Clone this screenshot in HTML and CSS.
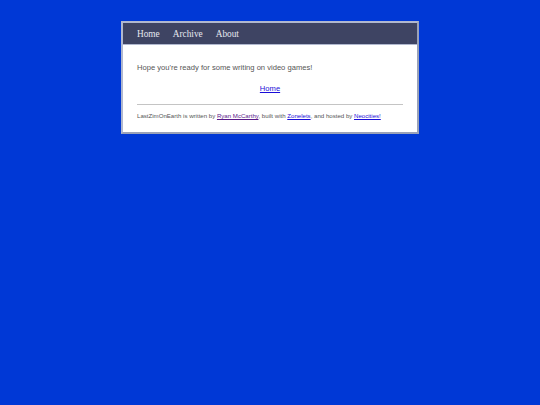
FILE: index.html
```html
<!DOCTYPE html>
<html lang="en">
<head>
<meta charset="utf-8">
<title>LastZimOnEarth</title>
<link rel="stylesheet" href="styles.css">
</head>
<body>
<div class="container">
  <nav class="header">
    <a class="nav-link" href="#">Home</a>
    <a class="nav-link" href="#">Archive</a>
    <a class="nav-link" href="#">About</a>
  </nav>
  <main class="content">
    <p class="intro">Hope you're ready for some writing on video games!</p>
    <p class="home-row"><a class="home-link" href="#">Home</a></p>
    <hr class="rule">
    <p class="footer">LastZimOnEarth is written by <a class="visited" href="#">Ryan McCarthy</a>, built with <a class="link" href="#">Zonelets</a>, and hosted by <a class="link" href="#">Neocities!</a></p>
  </main>
</div>
</body>
</html>
```
FILE: styles.css
```css
html, body {
  margin: 0;
  padding: 0;
}
body {
  background: #0038d6;
  font-family: "Liberation Sans", Arial, sans-serif;
  padding-top: 21px;
}
.container {
  width: 294px;
  margin: 0 auto;
  border: 2px solid #b0b8cf;
  border-right-color: #9aa2b8;
  border-bottom-color: #9aa2b8;
  background: #fff;
}
.header {
  background: #3e4463;
  height: 21px;
  display: flex;
  align-items: center;
  gap: 13px;
  padding-left: 14px;
}
.nav-link {
  font-family: "Liberation Serif", "Times New Roman", serif;
  font-size: 9.3px;
  color: #e6e8f0;
  text-decoration: none;
}
.content {
  padding: 16px 14px 12px;
  border-top: 1px solid #b0b8cf;
}
.intro {
  margin: 2px 0 0;
  font-size: 7.6px;
  color: #555;
  line-height: 10px;
}
.home-row {
  margin: 11px 0 0;
  text-align: center;
  font-size: 7.6px;
  line-height: 10px;
}
.home-link {
  color: #1a0dd8;
}
.rule {
  margin: 10px 0 0;
  border: 0;
  border-top: 1px solid #c4c4c4;
  height: 0;
}
.footer {
  margin: 7px 0 0;
  font-size: 6.1px;
  line-height: 8px;
  color: #555;
}
.visited {
  color: #5a1a8a;
}
.link {
  color: #1a0dd8;
}
```
